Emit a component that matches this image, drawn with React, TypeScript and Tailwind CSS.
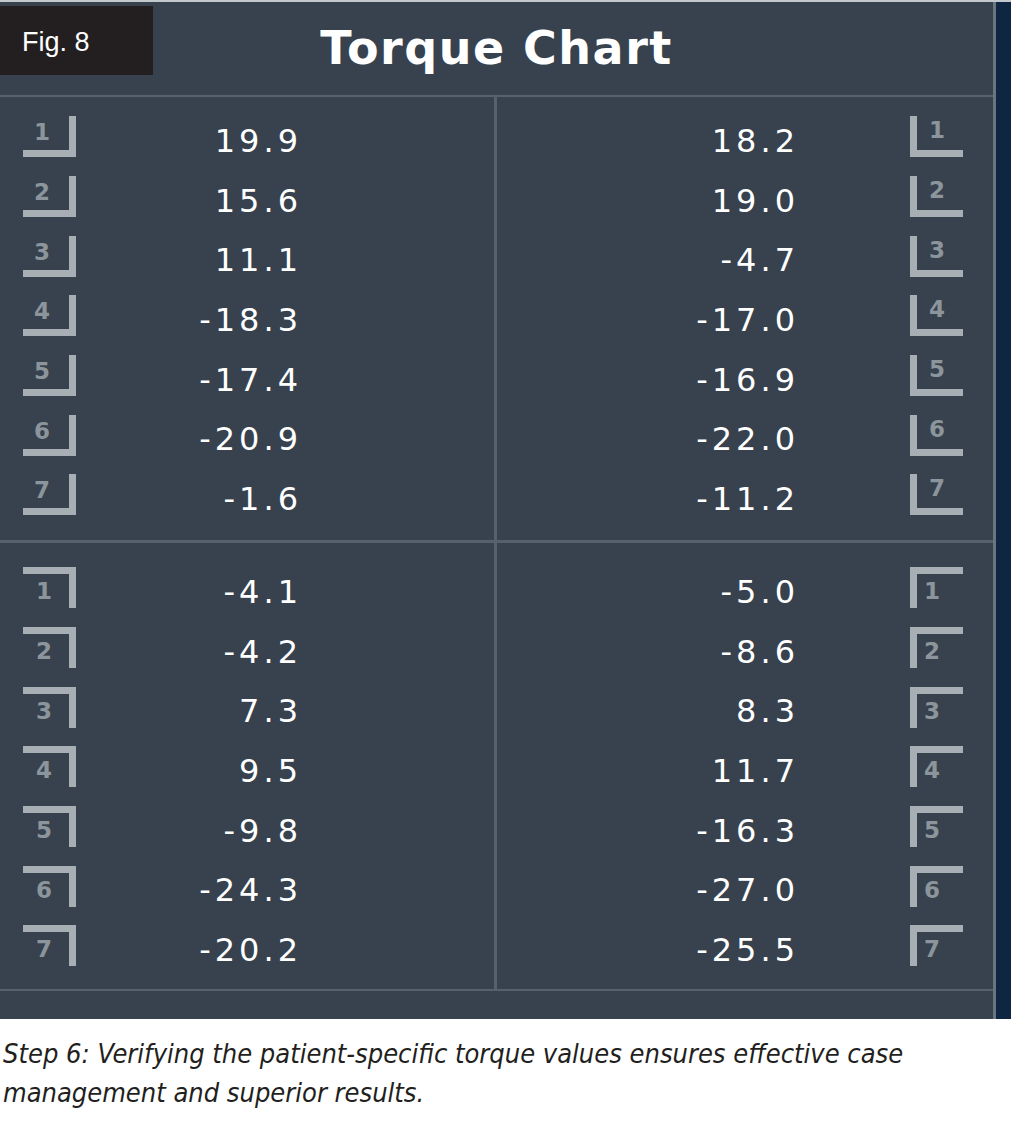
import React from "react";

type Row = { n: number; l: string; r: string };

const upper: Row[] = [
  { n: 1, l: "19.9", r: "18.2" },
  { n: 2, l: "15.6", r: "19.0" },
  { n: 3, l: "11.1", r: "-4.7" },
  { n: 4, l: "-18.3", r: "-17.0" },
  { n: 5, l: "-17.4", r: "-16.9" },
  { n: 6, l: "-20.9", r: "-22.0" },
  { n: 7, l: "-1.6", r: "-11.2" },
];

const lower: Row[] = [
  { n: 1, l: "-4.1", r: "-5.0" },
  { n: 2, l: "-4.2", r: "-8.6" },
  { n: 3, l: "7.3", r: "8.3" },
  { n: 4, l: "9.5", r: "11.7" },
  { n: 5, l: "-9.8", r: "-16.3" },
  { n: 6, l: "-24.3", r: "-27.0" },
  { n: 7, l: "-20.2", r: "-25.5" },
];

type Corner = "ul" | "ur" | "ll" | "lr";

function Bracket({ n, corner }: { n: number; corner: Corner }) {
  const box =
    corner === "ul"
      ? "border-r-[7px] border-b-[7px] pl-[11px] pt-[5px]"
      : corner === "ur"
      ? "border-l-[7px] border-b-[7px] pl-[12px] pt-[3px]"
      : corner === "ll"
      ? "border-r-[7px] border-t-[7px] pl-[13px] pt-[6px]"
      : "border-l-[7px] border-t-[7px] pl-[7px] pt-[6px]";
  return (
    <div
      className={`flex items-start justify-start w-[53px] h-[41px] mb-2 shrink-0 border-[#a8afb4] ${box}`}
    >
      <span className="text-[23px] leading-none font-bold text-[#8c959b] [font-family:'DejaVu_Sans',sans-serif]">
        {n}
      </span>
    </div>
  );
}

function Num({ v, w }: { v: string; w: string }) {
  return (
    <div
      className={`${w} text-right text-[32px] leading-none tracking-[4px] text-white [font-family:'DejaVu_Sans',sans-serif]`}
    >
      {v}
    </div>
  );
}

function Section({ rows, top, pt }: { rows: Row[]; top: boolean; pt: string }) {
  return (
    <div className="flex">
      <div className={`w-[494px] ${pt}`}>
        {rows.map((r) => (
          <div key={r.n} className="h-[59.7px] flex items-center pl-[23px]">
            <Bracket n={r.n} corner={top ? "ul" : "ll"} />
            <Num v={r.l} w="w-[226px]" />
          </div>
        ))}
      </div>
      <div className="w-[3px] bg-[#56616b]" />
      <div className={`flex-1 ${pt}`}>
        {rows.map((r) => (
          <div key={r.n} className="h-[59.7px] flex items-center">
            <Num v={r.r} w="w-[302px]" />
            <div className="ml-[111px]">
              <Bracket n={r.n} corner={top ? "ur" : "lr"} />
            </div>
          </div>
        ))}
      </div>
    </div>
  );
}

export default function App() {
  return (
    <div className="w-[1011px] h-[1138px] bg-white">
      <div className="h-[2px] bg-[#c3c8cc]" />
      <div className="flex h-[1017px]">
        <div className="w-[993px] bg-[#37424e] flex flex-col relative">
          <div className="absolute left-0 top-[4px] w-[153px] h-[69px] bg-[#231f20] flex items-center pl-[22px]">
            <span className="text-white text-[27px] leading-none [font-family:'Liberation_Sans',sans-serif] pt-[3px]">
              Fig. 8
            </span>
          </div>
          <div className="h-[93px] flex items-center justify-center pb-[2px]">
            <span className="text-white font-bold text-[46px] leading-none tracking-[1.5px] [font-family:'DejaVu_Sans',sans-serif]">
              Torque Chart
            </span>
          </div>
          <div className="h-[2px] bg-[#56616b]" />
          <div className="h-[443px]">
            <Section rows={upper} top={true} pt="pt-[14px] h-[443px]" />
          </div>
          <div className="h-[3px] bg-[#56616b]" />
          <div className="h-[446px]">
            <Section rows={lower} top={false} pt="pt-[19px] h-[446px]" />
          </div>
          <div className="h-[2px] bg-[#56616b]" />
          <div className="flex-1" />
        </div>
        <div className="w-[3px] bg-[#6a7580]" />
        <div className="flex-1 bg-[#0e2641]" />
      </div>
      <div className="pt-[15px] pl-[3px] pr-[60px] text-[27px] leading-[39px] italic text-[#231f20] [font-family:'Liberation_Sans_Narrow','DejaVu_Sans_Condensed',sans-serif]">
        Step 6: Verifying the patient-specific torque values ensures effective case management and superior results.
      </div>
    </div>
  );
}
